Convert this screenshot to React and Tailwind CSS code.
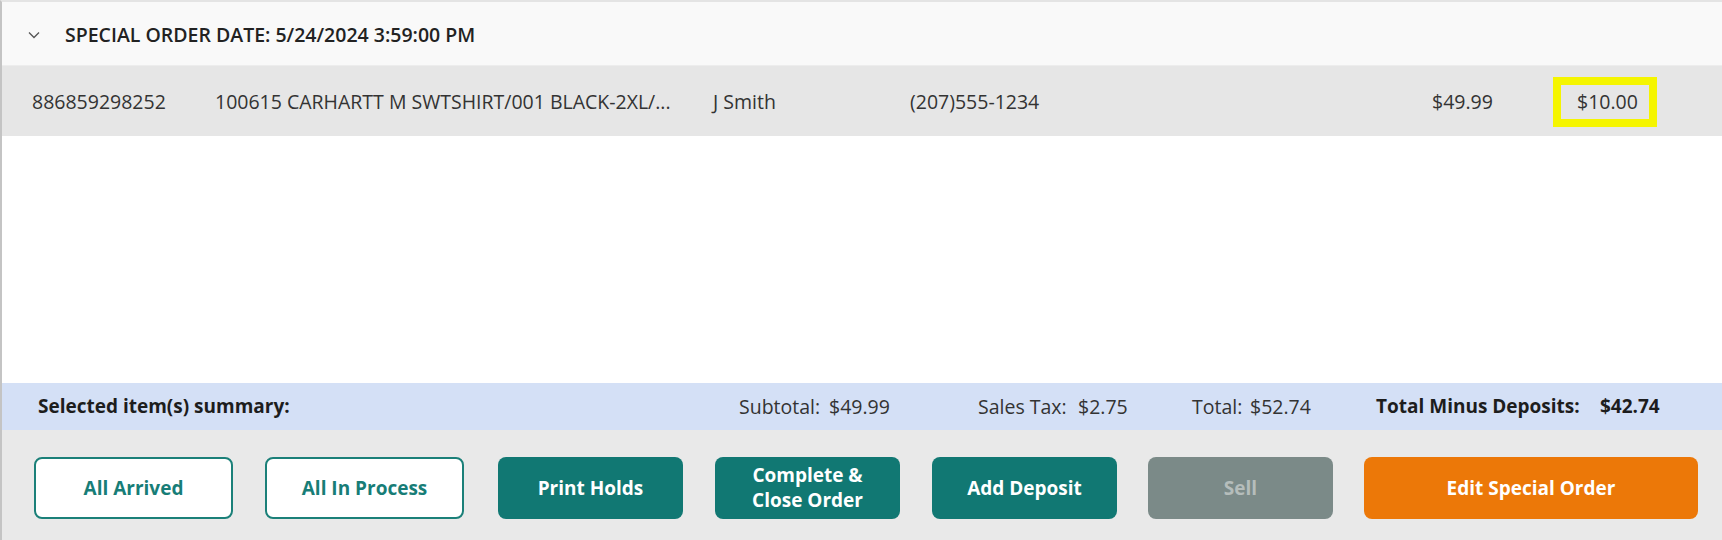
import React from "react";

function Chevron() {
  return (
    <svg width="12" height="8" viewBox="0 0 12 8" className="shrink-0">
      <polyline points="1,1.5 6,6.5 11,1.5" fill="none" stroke="#555" strokeWidth="1.3" />
    </svg>
  );
}

export default function App() {
  const outline =
    "h-[62px] rounded-lg border-2 border-[#1b8079] bg-white text-[#177d77] font-bold text-[19px] flex items-center justify-center";
  const teal =
    "h-[62px] rounded-lg bg-[#117873] text-white font-bold text-[19px] flex items-center justify-center text-center leading-[25px]";
  return (
    <div className="w-[1722px] h-[540px] flex flex-col border-l-2 border-t-2 border-l-[#c4c4c4] border-t-[#e4e4e4] bg-white font-['Open_Sans',sans-serif] overflow-hidden">
      <div className="h-[64px] shrink-0 bg-[#f9f9f9] flex items-center pl-[26px] pt-[2px] border-b border-[#ededed]">
        <Chevron />
        <span className="ml-[25px] text-[19.5px] font-semibold text-[#222]">
          SPECIAL ORDER DATE: 5/24/2024 3:59:00 PM
        </span>
      </div>
      <div className="h-[70px] shrink-0 bg-[#e6e6e6] flex items-center pl-[30px] pt-[1px] text-[19.5px] text-[#333] whitespace-nowrap">
        <span className="w-[183px] shrink-0">886859298252</span>
        <span className="w-[498px] shrink-0 overflow-hidden">100615 CARHARTT M SWTSHIRT/001 BLACK-2XL/...</span>
        <span className="w-[197px] shrink-0">J Smith</span>
        <span className="w-[522px] shrink-0">(207)555-1234</span>
        <span className="w-[121px] shrink-0">$49.99</span>
        <span className="w-[104px] h-[50px] shrink-0 border-[8px] border-[#f5f500] flex items-center pl-[16px]">$10.00</span>
      </div>
      <div className="flex-1 bg-white" />
      <div className="h-[47px] shrink-0 bg-[#d4e0f6] flex items-center pl-[36px] text-[19.5px] text-[#333] whitespace-nowrap">
        <span className="w-[701px] shrink-0 font-bold text-[19px] text-[#1d1d1d]">Selected item(s) summary:</span>
        <span className="w-[90px] shrink-0">Subtotal:</span>
        <span className="w-[149px] shrink-0">$49.99</span>
        <span className="w-[100px] shrink-0">Sales Tax:</span>
        <span className="w-[114px] shrink-0">$2.75</span>
        <span className="w-[58px] shrink-0">Total:</span>
        <span className="w-[126px] shrink-0">$52.74</span>
        <span className="w-[224px] shrink-0 font-bold text-[19px] text-[#1d1d1d]">Total Minus Deposits:</span>
        <span className="font-bold text-[19px] text-[#1d1d1d]">$42.74</span>
      </div>
      <div className="h-[110px] shrink-0 bg-[#e9e9e9] flex items-start pl-[32px] pt-[27px]">
        <button className={`w-[199px] ${outline}`}>All Arrived</button>
        <button className={`ml-[32px] w-[199px] ${outline}`}>All In Process</button>
        <button className={`ml-[34px] w-[185px] ${teal}`}>Print Holds</button>
        <button className={`ml-[32px] w-[185px] ${teal}`}>Complete &amp;<br />Close Order</button>
        <button className={`ml-[32px] w-[185px] ${teal}`}>Add Deposit</button>
        <button className="ml-[31px] w-[185px] h-[62px] rounded-lg bg-[#7b8a88] text-[#b5bdbb] font-bold text-[19px] flex items-center justify-center">Sell</button>
        <button className="ml-[31px] w-[334px] h-[62px] rounded-lg bg-[#ec7808] text-white font-bold text-[19px] flex items-center justify-center">Edit Special Order</button>
      </div>
    </div>
  );
}
